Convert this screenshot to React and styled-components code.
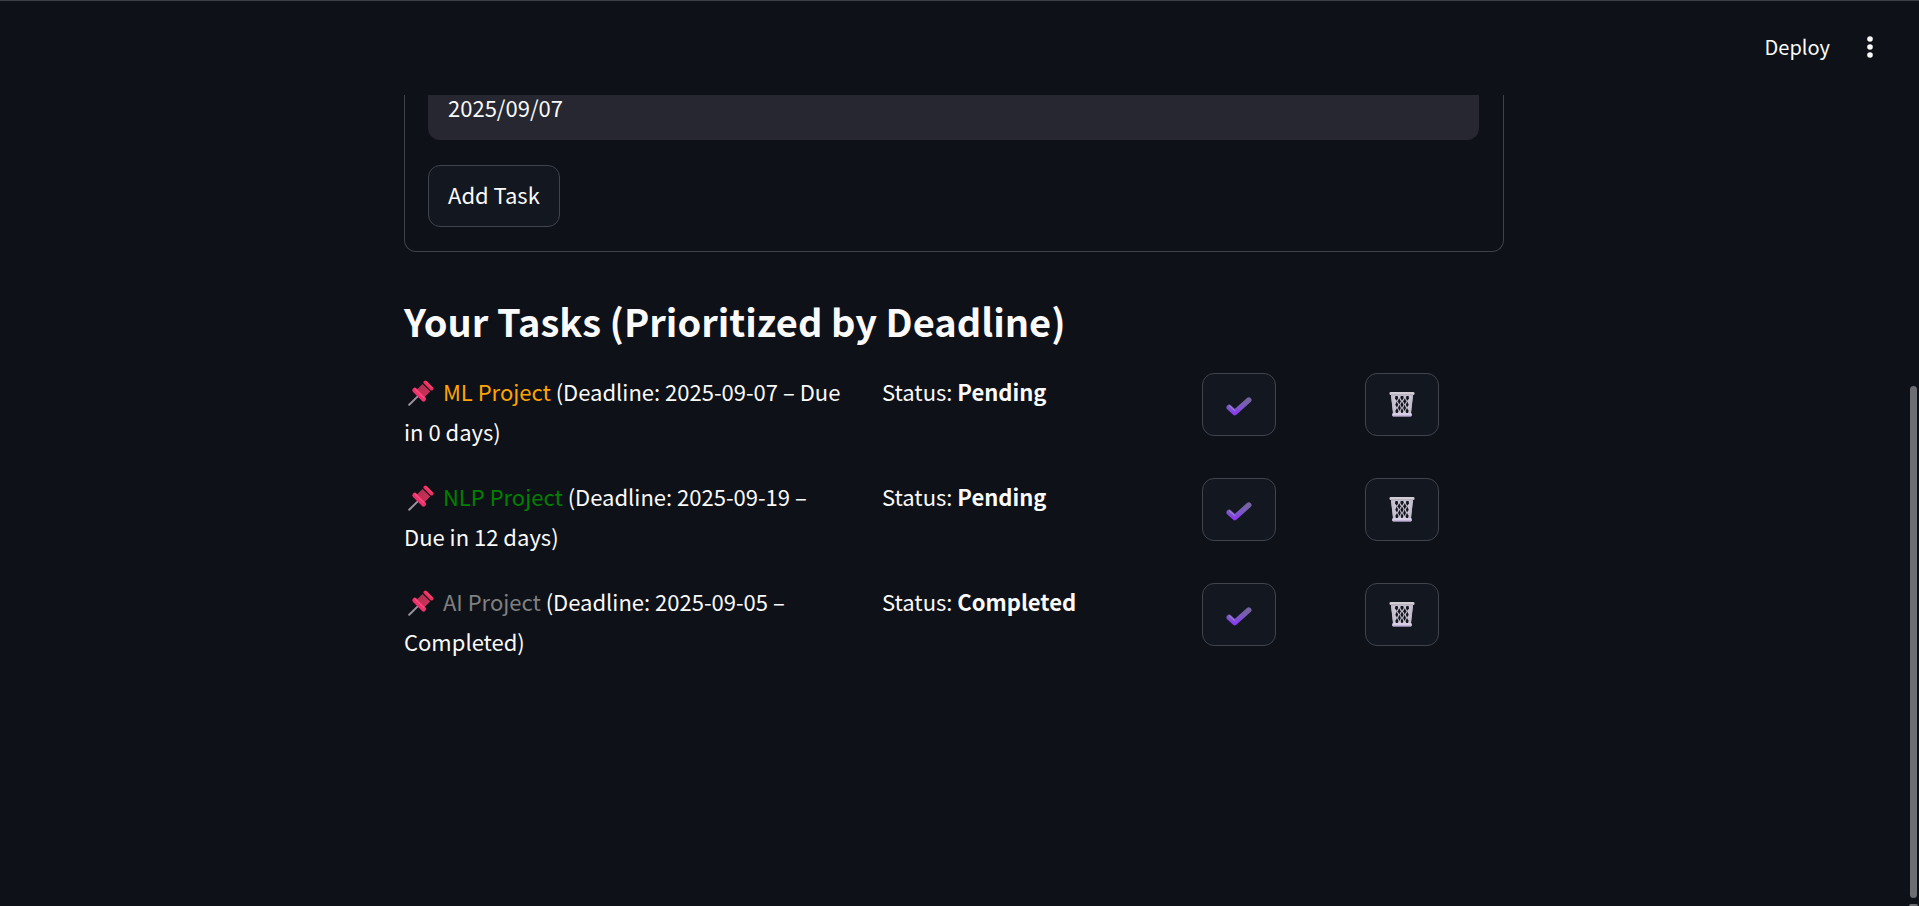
import React from "react";
import styled, { createGlobalStyle } from "styled-components";

const GlobalStyle = createGlobalStyle`
  *, *::before, *::after { box-sizing: border-box; }
  body {
    margin: 0;
    background: #0e1117;
    color: #fafafa;
    font-family: "Source Sans Pro", "Noto Sans CJK SC", sans-serif;
    font-size: 22px;
    line-height: 40px;
  }
  button, input { font: inherit; color: inherit; }
`;

const Page = styled.div`
  display: flex;
  height: 100vh;
  overflow: hidden;
  border-top: 1px solid #3d4046;
`;

const Content = styled.div`
  flex: 1;
  min-width: 0;
  display: flex;
  flex-direction: column;
`;

const Header = styled.header`
  flex: none;
  display: flex;
  align-items: center;
  justify-content: flex-end;
  gap: 24px;
  height: 94px;
  padding: 0 22px 2px 0;
`;

const HeaderButton = styled.button`
  display: flex;
  align-items: center;
  padding: 0;
  border: 0;
  background: none;
  font-size: 20px;
  line-height: 32px;
  cursor: pointer;
`;

const Viewport = styled.main`
  flex: 1;
  min-height: 0;
  overflow: hidden;
`;

const Block = styled.div`
  max-width: 1100px;
  margin: 0 auto;
`;

const TaskForm = styled.form`
  display: flex;
  flex-direction: column;
  align-items: flex-start;
  gap: 25px;
  padding: 0 24px 24px 23px;
  border: 1px solid #3f4146;
  border-top: 0;
  border-radius: 0 0 12px 12px;
  overflow: hidden;
`;

const DateInput = styled.input`
  width: 100%;
  height: 62px;
  margin-top: -17px;
  padding: 0 20px 4px;
  border: 0;
  border-radius: 12px;
  background: #262730;
  outline: none;
`;

const Button = styled.button`
  display: inline-flex;
  align-items: center;
  justify-content: center;
  height: ${(p) => (p.$icon ? 63 : 62)}px;
  padding: ${(p) => (p.$icon ? "0 23px" : "0 19px 4px")};
  border: 1px solid #41444c;
  border-radius: 12px;
  background: #131720;
  cursor: pointer;
`;

const Title = styled.h2`
  margin: 39px 0 22px;
  font-size: 38px;
  line-height: 60px;
  font-weight: 700;
`;

const TaskList = styled.ul`
  display: flex;
  flex-direction: column;
  gap: 25px;
  margin: 0;
  padding: 0;
  list-style: none;
`;

const TaskRow = styled.li`
  display: grid;
  grid-template-columns: 453fr 295fr 138fr 139fr;
  gap: 25px;
  align-items: start;
`;

const Text = styled.p`
  margin: -2px 0 2px;
  padding-right: 8px;
`;

const TaskName = styled.span`
  color: ${(p) => p.$color};
`;

const PinSvg = styled.svg`
  width: 26px;
  height: 26px;
  margin: 0 4px;
  vertical-align: -5px;
`;

const Rail = styled.div`
  flex: none;
  display: flex;
  flex-direction: column;
  align-items: center;
  width: 11px;
  padding-right: 1px;
`;

const RailSpace = styled.div`
  flex: ${(p) => p.$size};
`;

const Thumb = styled.div`
  flex: ${(p) => p.$size};
  width: 7px;
  border-radius: 4px;
  background: #6d6e73;
`;

const RailEnd = styled.div`
  flex: none;
  width: 9px;
  height: 2px;
  margin-top: 6px;
  border-radius: 2px 2px 0 0;
  background: #6d6e73;
`;

function Pin() {
  return (
    <PinSvg viewBox="0 0 26 26" aria-hidden="true">
      <defs>
        <linearGradient id="pinBody" x1="0" y1="0" x2="1" y2="1">
          <stop offset="0" stopColor="#a82f49" />
          <stop offset="1" stopColor="#d63160" />
        </linearGradient>
      </defs>
      <path d="M1.2 24.8 10.5 15.6" stroke="#9a929f" strokeWidth="2" strokeLinecap="round" />
      <path d="M8 10.5 14.5 4 22.3 11.5 15.5 18Z" fill="url(#pinBody)" />
      <path d="M17.4 2.4 23.6 8.6" stroke="#ec3162" strokeWidth="3.8" strokeLinecap="round" />
      <path d="M6.8 10.2 15.6 19" stroke="#ee2f70" strokeWidth="5" strokeLinecap="round" />
      <path d="M7 8.8 16 17.8" stroke="#fb5577" strokeWidth="1.2" strokeLinecap="round" />
      <path d="M18.2 1.8 24.2 7.8" stroke="#f64f70" strokeWidth="1" strokeLinecap="round" />
    </PinSvg>
  );
}

function Check() {
  return (
    <svg width="26" height="26" viewBox="0 0 26 26" aria-hidden="true">
      <defs>
        <linearGradient id="checkFill" x1="0" y1="0" x2="0" y2="1">
          <stop offset="0" stopColor="#75649f" />
          <stop offset="0.55" stopColor="#7b58c4" />
          <stop offset="1" stopColor="#8a3df0" />
        </linearGradient>
      </defs>
      <path d="M3.2 15.4 8.8 20.6 22.8 8" fill="none" stroke="url(#checkFill)" strokeWidth="5.4" strokeLinecap="round" strokeLinejoin="round" />
      <path d="M3.6 14 8.8 18.6" fill="none" stroke="#9480c8" strokeWidth="1.2" strokeLinecap="round" />
    </svg>
  );
}

function Trash() {
  return (
    <svg width="26" height="26" viewBox="0 0 26 26" aria-hidden="true">
      <path d="M1.8 2H24.2L21.8 23.4H4.2Z" fill="#cbc4d4" />
      <g fill="#15171f">
        <path d="M6.4 4H8.6L9.2 6 7.8 8.8 6 6.6Z" />
        <path d="M11.7 4H14.3L14.7 6 13 8.8 11.3 6Z" />
        <path d="M17.4 4H19.6L20 6.6 18.2 8.8 16.8 6Z" />
        <path d="m10.2 6.2 1.6 3.1-1.5 3.1-1.6-3.1Z" />
        <path d="m15.8 6.2 1.5 3.1-1.6 3.1-1.5-3.1Z" />
        <path d="m7.7 9.6 1.5 3.1-1.3 2.9-1.6-2.9Z" />
        <path d="m13 9.4 1.6 3.3-1.6 3.1-1.6-3.1Z" />
        <path d="m18.3 9.6 1.4 3.1-1.6 2.9-1.3-2.9Z" />
        <path d="m10.4 12.8 1.5 3.2-1.4 3.1L9 16Z" />
        <path d="m15.6 12.8 1.4 3.2-1.5 3.1-1.4-3.1Z" />
        <path d="m8 16 1.5 2.9-.9 2.3H7l-.6-2.5Z" />
        <path d="m13 16 1.4 2.9-.9 2.3h-1l-.9-2.3Z" />
        <path d="m18 16 1.6 2.7-.6 2.5h-1.6l-.9-2.3Z" />
      </g>
      <path d="m2.8 2.7 2.4 19.8M23.2 2.7l-2.4 19.8" stroke="#c3bccb" strokeWidth="1.6" />
      <rect x="0.5" y="0" width="25" height="3" rx="1.3" fill="#d2cdd4" />
      <path d="M2 2.8H24" stroke="#a69eae" strokeWidth="0.8" />
      <rect x="3.2" y="21" width="19.6" height="3.4" rx="1.2" fill="#d8cfe6" />
      <path d="M4 24H22" stroke="#a68fc4" strokeWidth="0.8" />
    </svg>
  );
}

function Dots() {
  return (
    <svg width="32" height="32" viewBox="0 0 32 32" fill="#fafafa" aria-hidden="true">
      <circle cx="16" cy="8" r="2.8" />
      <circle cx="16" cy="16" r="2.8" />
      <circle cx="16" cy="24" r="2.8" />
    </svg>
  );
}

const tasks = [
  { name: "ML Project", color: "orange", detail: "(Deadline: 2025-09-07 – Due in 0 days)", status: "Pending" },
  { name: "NLP Project", color: "green", detail: "(Deadline: 2025-09-19 – Due in 12 days)", status: "Pending" },
  { name: "AI Project", color: "gray", detail: "(Deadline: 2025-09-05 – Completed)", status: "Completed" },
];

export default function App() {
  return (
    <Page>
      <GlobalStyle />
      <Content>
        <Header>
          <HeaderButton type="button">Deploy</HeaderButton>
          <HeaderButton type="button" aria-label="Main menu">
            <Dots />
          </HeaderButton>
        </Header>
        <Viewport>
          <Block>
            <TaskForm onSubmit={(e) => e.preventDefault()}>
              <DateInput type="text" aria-label="Deadline" defaultValue="2025/09/07" />
              <Button type="submit">Add Task</Button>
            </TaskForm>
            <Title>Your Tasks (Prioritized by Deadline)</Title>
            <TaskList>
              {tasks.map((task) => (
                <TaskRow key={task.name}>
                  <Text>
                    <Pin /> <TaskName $color={task.color}>{task.name}</TaskName> {task.detail}
                  </Text>
                  <Text>
                    Status: <strong>{task.status}</strong>
                  </Text>
                  <div>
                    <Button type="button" $icon aria-label={`Complete ${task.name}`}>
                      <Check />
                    </Button>
                  </div>
                  <div>
                    <Button type="button" $icon aria-label={`Delete ${task.name}`}>
                      <Trash />
                    </Button>
                  </div>
                </TaskRow>
              ))}
            </TaskList>
          </Block>
        </Viewport>
      </Content>
      <Rail aria-hidden="true">
        <RailSpace $size={385} />
        <Thumb $size={512} />
        <RailEnd />
      </Rail>
    </Page>
  );
}
